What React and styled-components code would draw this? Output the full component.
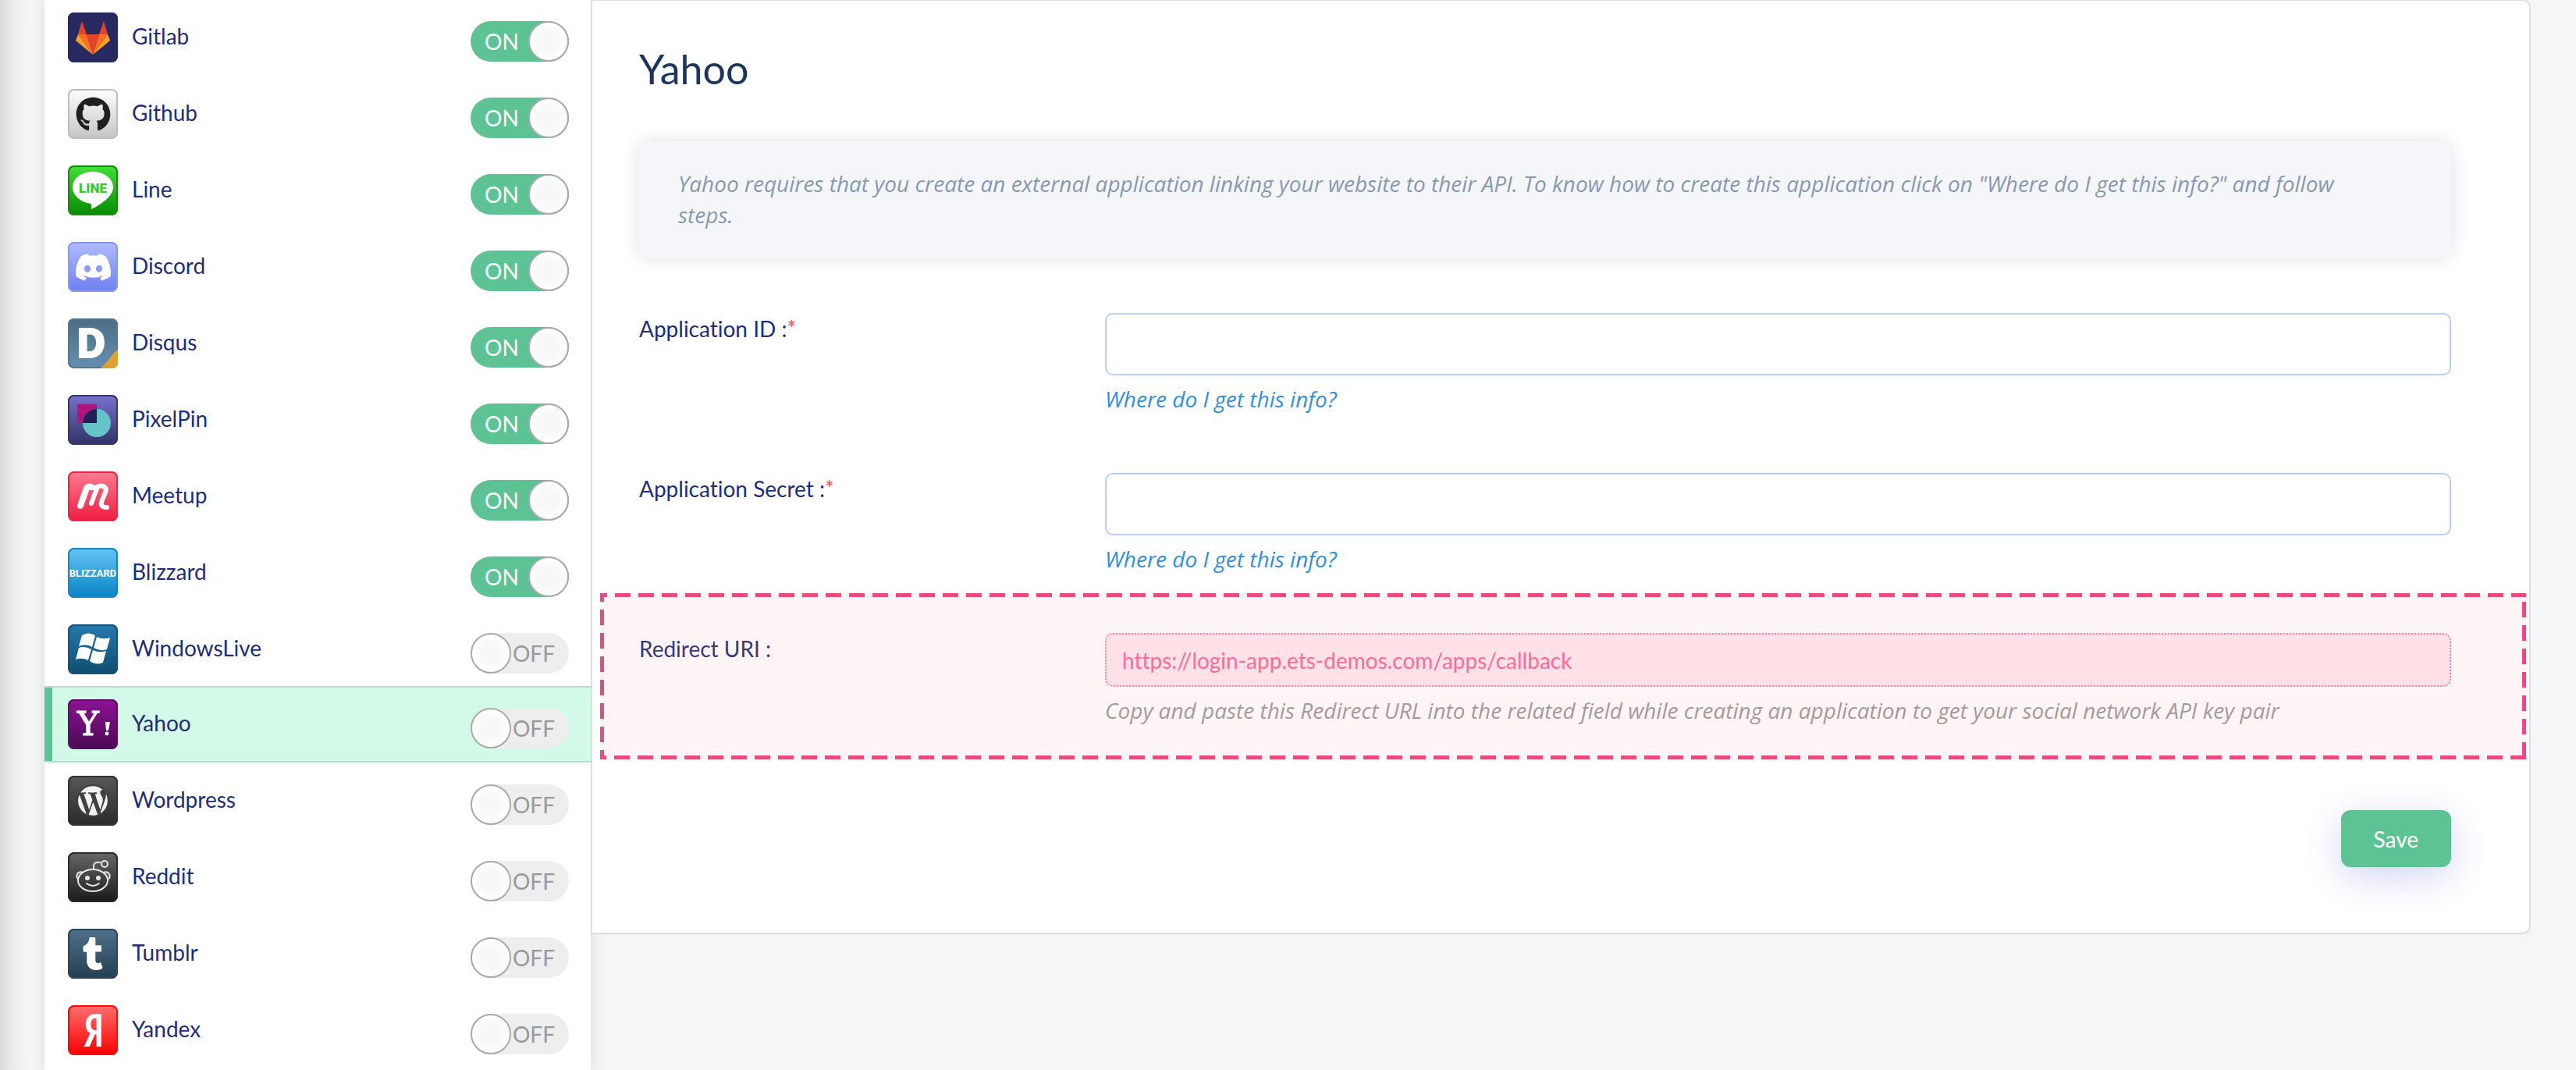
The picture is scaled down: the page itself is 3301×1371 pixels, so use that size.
import { useState } from "react";
import styled, { createGlobalStyle } from "styled-components";
import { FaDiscord, FaGithub, FaTumblr, FaYandex } from "react-icons/fa6";
import { SiWordpress } from "react-icons/si";

const GlobalStyle = createGlobalStyle`
  * {
    box-sizing: border-box;
  }
  body {
    margin: 0;
    overflow-x: hidden;
    background: #f4f6f8;
    font-family: Lato, "Open Sans", sans-serif;
    font-size: 28px;
    font-variant-ligatures: none;
    line-height: 40px;
    color: #1f2d78;
  }
`;

const Page = styled.div`
  display: flex;
  align-items: flex-start;
  min-height: 100vh;
  padding-right: 58px;
`;

const Edge = styled.div`
  flex: 0 0 57px;
  align-self: stretch;
  background: linear-gradient(90deg, #d9d9db 0, #e7e8ea 12px, #f1f2f4 28px, #f4f6f8 40px);
`;

const Sidebar = styled.aside`
  flex: 0 0 700px;
  align-self: stretch;
  background: #ffffff;
  box-shadow: 0 0 20px rgba(0, 0, 0, 0.12);
`;

const NetworkList = styled.ul`
  list-style: none;
  margin: -1px 0 0;
  padding: 0;
`;

const NetworkItem = styled.li`
  display: flex;
  align-items: center;
  height: 98px;
  padding: 0 28px 0 30px;
  margin-top: ${(props) => (props.$active ? "-2px" : "0")};
  border-top: 2px solid ${(props) => (props.$active ? "#b9dccb" : "transparent")};
  border-bottom: 2px solid ${(props) => (props.$active ? "#b9dccb" : "transparent")};
  background: ${(props) => (props.$active ? "#d3fae8" : "transparent")};
  box-shadow: ${(props) => (props.$active ? "inset 10px 0 0 #5ec394" : "none")};
`;

const Tile = styled.span`
  display: flex;
  align-items: center;
  justify-content: center;
  width: 64px;
  height: 64px;
  border-radius: 8px;
  color: ${(props) => props.$color || "#ffffff"};
  background: linear-gradient(${(props) => props.$from}, ${(props) => props.$to});
  box-shadow: inset 0 0 0 2px ${(props) => props.$edge};

  svg {
    overflow: visible;
  }
`;

const NetworkName = styled.label`
  flex: 1;
  margin-left: 18px;
  padding-bottom: 4px;
`;

const Switch = styled.label`
  position: relative;
  display: flex;
  align-items: center;
  align-self: flex-start;
  justify-content: ${(props) => (props.$on ? "flex-start" : "flex-end")};
  width: 126px;
  height: 52px;
  margin-top: 26px;
  padding: 0 18px;
  border-radius: 26px;
  background: ${(props) => (props.$on ? "#5ec394" : "#eeeeee")};
  color: ${(props) => (props.$on ? "#ffffff" : "#999999")};
  cursor: pointer;
`;

const SwitchInput = styled.input`
  position: absolute;
  top: 0;
  right: ${(props) => (props.checked ? "0" : "auto")};
  left: ${(props) => (props.checked ? "auto" : "0")};
  width: 52px;
  height: 52px;
  margin: 0;
  appearance: none;
  border: 2px solid #aaaaaa;
  border-radius: 50%;
  background: radial-gradient(#f8f8f9 40%, #ffffff 68%);
  cursor: pointer;
`;

const Panel = styled.main`
  flex: 1;
  min-width: 0;
  position: relative;
  margin-top: -1px;
  padding: 55px 100px 84px 60px;
  background: #ffffff;
  border: 2px solid #dddddd;
  border-radius: 0 10px 10px 0;
`;

const Title = styled.h1`
  margin: 0;
  font-size: 52px;
  font-weight: 400;
  line-height: 64px;
  color: #1c355e;
`;

const Notice = styled.p`
  margin: 61px 0 70px;
  padding: 34px 80px 36px 50px;
  border-radius: 10px;
  background: #f4f6fa;
  box-shadow: 0 0 24px rgba(0, 0, 0, 0.12);
  color: #8799b0;
  font-family: "Open Sans", sans-serif;
  font-style: italic;
`;

const Field = styled.div`
  display: grid;
  grid-template-columns: 597px 1fr;
  align-items: start;
  position: relative;
  margin-bottom: 75px;
`;

// Dashed frame drawn with gradients to get 20px dashes and 10px gaps
const HighlightedField = styled(Field)`
  margin-bottom: 108px;

  &::after {
    content: "";
    position: absolute;
    top: -51px;
    right: -96px;
    bottom: -43px;
    left: -50px;
    pointer-events: none;
    background-image: linear-gradient(90deg, #eb4a7f 20px, transparent 20px),
      linear-gradient(90deg, #eb4a7f 20px, transparent 20px),
      linear-gradient(#eb4a7f 20px, transparent 20px),
      linear-gradient(#eb4a7f 20px, transparent 20px);
    background-repeat: repeat-x, repeat-x, repeat-y, repeat-y;
    background-size: 30px 5px, 30px 5px, 5px 30px, 5px 30px;
    background-position: -11px top, -12px bottom, left -9px, right 11px;
    background-color: rgba(255, 155, 165, 0.1);
  }
`;

const FieldLabel = styled.label``;

const Required = styled.span`
  color: #ff4d57;
`;

const Control = styled.div`
  display: flex;
  flex-direction: column;
  align-items: flex-start;
  gap: 10px;
`;

const TextInput = styled.input`
  width: 100%;
  height: 80px;
  padding: 0 20px;
  border: 2px solid #b8cffb;
  border-radius: 10px;
  background: #ffffff;
  font: inherit;
  color: inherit;
`;

const RedirectInput = styled(TextInput)`
  height: 69px;
  border: 2px dotted #ff7ba3;
  background: #ffe9ef;
  color: #ff6595;
`;

const InfoLink = styled.a`
  color: #2f8fdd;
  font-family: "Open Sans", sans-serif;
  font-style: italic;
  text-decoration: none;
`;

const Hint = styled.span`
  color: #9e9999;
  font-family: "Open Sans", sans-serif;
  font-style: italic;
`;

const Actions = styled.div`
  display: flex;
  justify-content: flex-end;
`;

const SaveButton = styled.button`
  height: 73px;
  padding: 0 42px;
  border: none;
  border-radius: 12px;
  background: #5ec394;
  box-shadow: 0 12px 48px rgba(70, 80, 200, 0.24);
  color: #ffffff;
  font: inherit;
  cursor: pointer;
`;

const GitlabLogo = () => (
  <svg width="64" height="64" viewBox="0 0 64 64">
    <path d="M18 11L24 28H13ZM46 11L40 28H51ZM24 28H40L32 54Z" fill="#e24329" />
    <path d="M13 28H24L32 54ZM51 28H40L32 54Z" fill="#fc6d26" />
    <path d="M13 28L10 36L32 54ZM51 28L54 36L32 54Z" fill="#fca326" />
  </svg>
);

const LineLogo = () => (
  <svg width="64" height="64" viewBox="0 0 64 64">
    <path d="M32 8C17 8 6 17 6 28C6 38 16 47 29 49C31 50 30 53 30 56C43 50 58 39 58 28C58 17 47 8 32 8Z" fill="#fff" />
    <text x="32" y="35" textAnchor="middle" fontFamily="Roboto" fontWeight="900" fontSize="17" fill="#37cb30">
      LINE
    </text>
  </svg>
);

const DisqusLogo = () => (
  <svg width="64" height="64" viewBox="0 0 64 64">
    <path d="M60 43L64 40V56Q64 64 56 64H42L48 58Z" fill="#e0a030" />
    <text x="10" y="51" fontFamily="Open Sans" fontWeight="800" fontSize="54" fill="#fff">
      D
    </text>
  </svg>
);

const PixelPinLogo = () => (
  <svg width="64" height="64" viewBox="0 0 64 64">
    <rect x="12" y="12" width="25" height="24" fill="#b0127e" />
    <circle cx="37" cy="36" r="18" fill="#67c4c6" />
    <path d="M37 36V18A18 18 0 0 0 19 36Z" fill="#241d57" />
  </svg>
);

const MeetupLogo = () => (
  <svg width="64" height="64" viewBox="0 0 64 64" fill="none" stroke="#fff" strokeLinecap="round" strokeLinejoin="round">
    <path d="M16 44L23 24Q25 18 30 20" strokeWidth="8" />
    <path d="M30 41L37 22" strokeWidth="6" />
    <path d="M29 20Q33 22 37 20Q43 17 47 20Q50 22 48 27L43 39Q41 46 50 46" strokeWidth="6" />
  </svg>
);

const BlizzardLogo = () => (
  <svg width="64" height="64" viewBox="0 0 64 64">
    <text
      x="32"
      y="37"
      textAnchor="middle"
      fontFamily="Liberation Sans Narrow, Roboto"
      fontWeight="700"
      fontSize="13"
      fill="#fff"
    >
      BLIZZARD
    </text>
  </svg>
);

const WindowsLogo = () => (
  <svg width="64" height="64" viewBox="0 0 64 64" fill="#fff">
    <path d="M18 14Q26 9 35 14L31 29Q23 24 14 28Z" />
    <path d="M37 16Q45 20 54 17L50 32Q42 35 33 30Z" />
    <path d="M14 30Q22 27 30 32L26 46Q18 42 10 45Z" />
    <path d="M32 33Q41 37 49 34L45 49Q36 53 28 47Z" />
  </svg>
);

const YahooLogo = () => (
  <svg width="64" height="64" viewBox="0 0 64 64" fill="#fff">
    <text x="12" y="46" fontFamily="DejaVu Serif" fontSize="42" stroke="#fff" strokeWidth="1">
      Y
    </text>
    <path d="M48 29H54L52 40H49Z" />
    <circle cx="50" cy="44" r="2.4" />
  </svg>
);

const WordpressLogo = () => (
  <svg width="64" height="64" viewBox="0 0 64 64">
    <circle cx="32" cy="32" r="20" fill="#f2f2f2" />
    <SiWordpress x="11" y="11" size="42" color="#404040" />
  </svg>
);

const RedditLogo = () => (
  <svg width="64" height="64" viewBox="0 0 64 64" fill="none" stroke="#e6e6e6" strokeWidth="2">
    <path d="M14 35A5 5 0 1 1 19 26M51 35A5 5 0 1 0 46 26" />
    <ellipse cx="32" cy="36" rx="19" ry="14" />
    <path d="M33 22V18Q33 13 38 13H42" />
    <circle cx="47" cy="15" r="4" />
    <path d="M24 40Q32 46 40 40" strokeLinecap="round" />
    <circle cx="25" cy="33" r="3" fill="#e6e6e6" stroke="none" />
    <circle cx="39" cy="33" r="3" fill="#e6e6e6" stroke="none" />
  </svg>
);

const networks = [
  { name: "Gitlab", on: true, logo: <GitlabLogo />, from: "#292961", to: "#292961", edge: "#292961" },
  { name: "Github", on: true, logo: <FaGithub size={45} />, color: "#1d1f20", from: "#ffffff", to: "#c4c4c4", edge: "#bdbdbd" },
  { name: "Line", on: true, logo: <LineLogo />, from: "#42e03a", to: "#088a02", edge: "#128c0c" },
  { name: "Discord", on: true, logo: <FaDiscord size={49} />, from: "#b0bcff", to: "#6c80f2", edge: "#8598fa" },
  { name: "Disqus", on: true, logo: <DisqusLogo />, from: "#4d6c85", to: "#6390b0", edge: "#557891" },
  { name: "PixelPin", on: true, logo: <PixelPinLogo />, from: "#7872d0", to: "#303366", edge: "#343767" },
  { name: "Meetup", on: true, logo: <MeetupLogo />, from: "#fb7d90", to: "#ef1b42", edge: "#ef2449" },
  { name: "Blizzard", on: true, logo: <BlizzardLogo />, from: "#66c4f4", to: "#0784c3", edge: "#1089c5" },
  { name: "WindowsLive", on: false, logo: <WindowsLogo />, from: "#2579ab", to: "#114d70", edge: "#14537a" },
  { name: "Yahoo", on: false, logo: <YahooLogo />, from: "#8d1396", to: "#4a0a52", edge: "#5c0d64" },
  { name: "Wordpress", on: false, logo: <WordpressLogo />, from: "#585858", to: "#292929", edge: "#333333" },
  { name: "Reddit", on: false, logo: <RedditLogo />, from: "#676767", to: "#1a1a1a", edge: "#2a2a2a" },
  { name: "Tumblr", on: false, logo: <FaTumblr size={42} />, from: "#4f708c", to: "#253e50", edge: "#2b475c" },
  {
    name: "Yandex",
    on: false,
    logo: <FaYandex size={40} stroke="#ffffff" strokeWidth="24" />,
    from: "#ff6f6f",
    to: "#fb0000",
    edge: "#ff0808",
  },
];

const Network = ({ network, active }) => {
  const [on, setOn] = useState(network.on);
  const id = `switch-${network.name}`;

  return (
    <NetworkItem $active={active}>
      <Tile $from={network.from} $to={network.to} $edge={network.edge} $color={network.color}>
        {network.logo}
      </Tile>
      <NetworkName htmlFor={id}>{network.name}</NetworkName>
      <Switch $on={on}>
        <SwitchInput id={id} type="checkbox" checked={on} onChange={() => setOn(!on)} />
        {on ? "ON" : "OFF"}
      </Switch>
    </NetworkItem>
  );
};

const App = () => {
  return (
    <>
      <GlobalStyle />
      <Page>
        <Edge />
        <Sidebar>
          <NetworkList>
            {networks.map((network) => (
              <Network key={network.name} network={network} active={network.name === "Yahoo"} />
            ))}
          </NetworkList>
        </Sidebar>
        <Panel>
          <Title>Yahoo</Title>
          <Notice>
            Yahoo requires that you create an external application linking your website to their API. To know how to
            create this application click on "Where do I get this info?" and follow steps.
          </Notice>
          <Field>
            <FieldLabel htmlFor="app-id">
              Application ID :<Required>*</Required>
            </FieldLabel>
            <Control>
              <TextInput id="app-id" type="text" />
              <InfoLink href="#app-id">Where do I get this info?</InfoLink>
            </Control>
          </Field>
          <Field>
            <FieldLabel htmlFor="app-secret">
              Application Secret :<Required>*</Required>
            </FieldLabel>
            <Control>
              <TextInput id="app-secret" type="text" />
              <InfoLink href="#app-secret">Where do I get this info?</InfoLink>
            </Control>
          </Field>
          <HighlightedField>
            <FieldLabel htmlFor="redirect-uri">Redirect URI :</FieldLabel>
            <Control>
              <RedirectInput
                id="redirect-uri"
                type="text"
                readOnly
                value="https://login-app.ets-demos.com/apps/callback"
              />
              <Hint>
                Copy and paste this Redirect URL into the related field while creating an application to get your social
                network API key pair
              </Hint>
            </Control>
          </HighlightedField>
          <Actions>
            <SaveButton type="button">Save</SaveButton>
          </Actions>
        </Panel>
      </Page>
    </>
  );
};

export default App;
